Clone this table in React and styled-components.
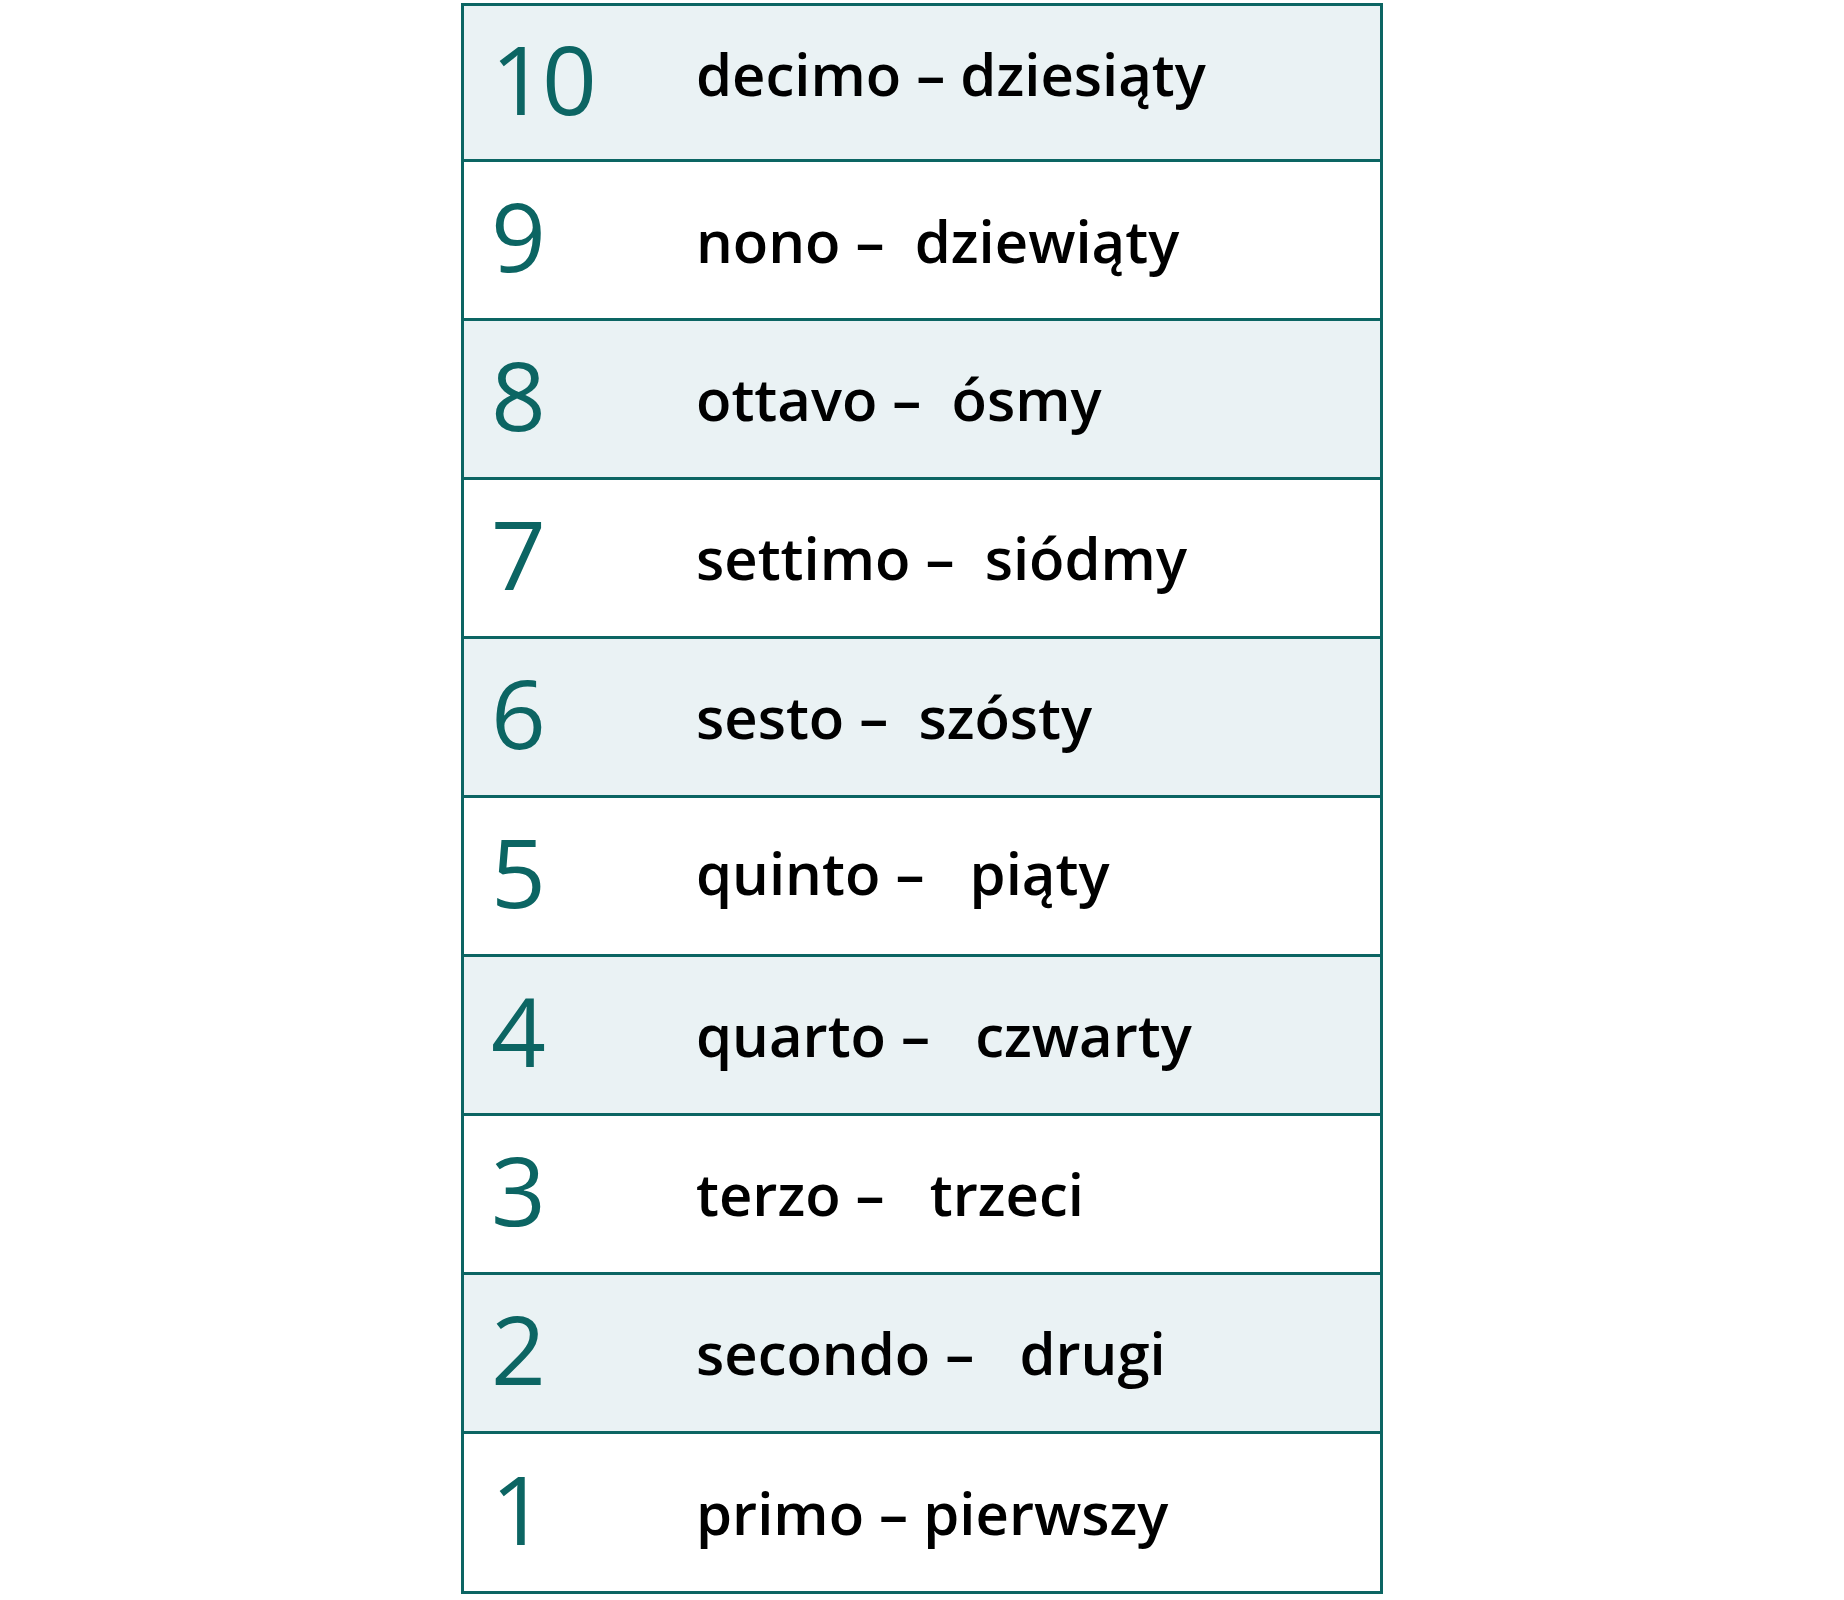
import React from 'react';
import styled, { createGlobalStyle } from 'styled-components';

// liczebniki porządkowe: włoski – polski
const rows = [
  { n: '10', text: 'decimo – dziesiąty', lift: 9 },
  { n: '9', text: 'nono –\u00a0 dziewiąty', lift: -1 },
  { n: '8', text: 'ottavo –\u00a0 ósmy' },
  { n: '7', text: 'settimo –\u00a0 siódmy' },
  { n: '6', text: 'sesto –\u00a0 szósty' },
  { n: '5', text: 'quinto –\u00a0\u00a0 piąty', lift: 3 },
  { n: '4', text: 'quarto –\u00a0\u00a0 czwarty' },
  { n: '3', text: 'terzo –\u00a0\u00a0 trzeci' },
  { n: '2', text: 'secondo –\u00a0\u00a0 drugi' },
  { n: '1', text: 'primo – pierwszy' },
];

const App = () => {
  return (
    <>
      <GlobalStyle />
      <Page>
        <Table>
          {rows.map((row, i) => (
            <Row key={row.n} shaded={i % 2 === 0}>
              <Num>{row.n}</Num>
              <Words lift={row.lift || 0}>{row.text}</Words>
            </Row>
          ))}
        </Table>
      </Page>
    </>
  );
};

const GlobalStyle = createGlobalStyle`
  body {
    margin: 0;
    background: #ffffff;
    font-family: "Open Sans", "Noto Sans", sans-serif;
  }
`;

const Page = styled.div`
  display: flex;
  justify-content: center;
  padding-top: 3px;
`;

const Table = styled.div`
  display: flex;
  flex-direction: column;
  width: 922px;
  box-sizing: border-box;
  border: 3px solid #0c6563;
`;

const Row = styled.div.withConfig({ shouldForwardProp: (p) => p !== 'shaded' })`
  display: flex;
  align-items: center;
  height: 156px;
  background: ${(props) => (props.shaded ? '#eaf2f4' : '#ffffff')};
  & + & {
    border-top: 3px solid #0c6563;
  }
  &:first-child {
    height: 153px;
  }
  &:last-child {
    height: 157px;
  }
`;

const Num = styled.div`
  width: 232px;
  padding: 0 0 10px 27px;
  box-sizing: border-box;
  font-size: 96px;
  font-weight: 400;
  letter-spacing: -4px;
  line-height: 1;
  color: #0c6563;
`;

const Words = styled.div.withConfig({ shouldForwardProp: (p) => p !== 'lift' })`
  font-size: 58px;
  font-weight: 600;
  line-height: 1;
  color: #000000;
  white-space: pre;
  margin-bottom: ${(props) => props.lift * 2}px;
`;

export default App;
